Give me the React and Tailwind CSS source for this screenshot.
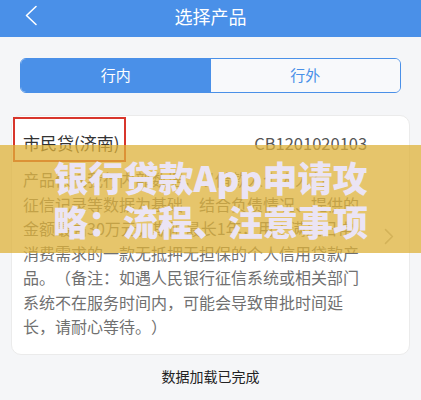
import React from "react";

const lines = [
  "产品依托我行内部数据，以借款人个人人行",
  "征信记录等数据为基础、结合负债情况、提供的",
  "金额最高30万元，期限最长1年，用于满足日常",
  "消费需求的一款无抵押无担保的个人信用贷款产",
  "品。（备注：如遇人民银行征信系统或相关部门",
  "系统不在服务时间内，可能会导致审批时间延",
  "长，请耐心等待。）",
];

export default function App() {
  return (
    <div className="relative w-[421px] h-[400px] overflow-hidden bg-[#f5f6f8] font-['Noto_Sans_CJK_SC','Noto_Sans',sans-serif] [text-spacing-trim:space-all]">
      {/* header */}
      <div className="relative flex h-[37px] items-center justify-center bg-[#4a90e8]">
        <svg
          className="absolute left-[24px] top-[5px]"
          width="14"
          height="21"
          viewBox="0 0 14 21"
          fill="none"
        >
          <path d="M12 1.5 L2.5 10.5 L12 19.5" stroke="#fff" strokeWidth="1.6" strokeLinecap="round" strokeLinejoin="round" />
        </svg>
        <span className="pb-[5px] text-[18px] leading-[24px] text-white">选择产品</span>
      </div>

      {/* segment */}
      <div className="px-[20px] pt-[21px]">
        <div className="flex h-[35px] overflow-hidden rounded-[6px] border border-[#4a90e8]">
          <div className="flex flex-1 items-center justify-center bg-[#4a90e8] text-[15px] text-white">行内</div>
          <div className="flex flex-1 items-center justify-center bg-[#f8f9fb] text-[15px] text-[#4a90e8]">行外</div>
        </div>
      </div>

      {/* card */}
      <div className="relative mx-[11px] mt-[22px] flex items-center rounded-[10px] border border-[#ebebeb] bg-white pb-[15px] pl-[11px] pr-[15px] pt-[15px]">
        <div className="w-[348px]">
          <div className="flex h-[24px] items-center justify-between">
            <span className="text-[17px] text-[#333]">市民贷(济南)</span>
            <span className="text-[16.5px] text-[#555]">CB1201020103</span>
          </div>
          <div className="mt-[12px] text-[16px] leading-[24.5px] text-[#707070]">
            {lines.map((l, i) => (
              <div key={i} className="whitespace-nowrap">{l}</div>
            ))}
          </div>
        </div>
        <svg className="ml-[17px] mt-[4px]" width="10" height="17" viewBox="0 0 10 17" fill="none">
          <path d="M1.5 1.5 L8.5 8.5 L1.5 15.5" stroke="#b5b5b5" strokeWidth="1.6" strokeLinecap="round" strokeLinejoin="round" />
        </svg>
        <div className="absolute left-[1px] top-[1px] h-[45px] w-[113px] border-2 border-[#d8362c]" />
      </div>

      {/* footer */}
      <div className="mt-[10px] text-center text-[14px] leading-[22px] text-[#222]">数据加载已完成</div>

      {/* banner overlay */}
      <div className="absolute inset-x-0 top-[145px] flex h-[108px] flex-col items-center justify-center bg-[rgba(222,178,58,0.75)]">
        <div className="text-center text-[35px] font-black leading-[44px] text-[#ebe4f4] [text-spacing-trim:normal]">
          <div>银行贷款App申请攻</div>
          <div>略：流程、注意事项</div>
        </div>
      </div>
    </div>
  );
}
